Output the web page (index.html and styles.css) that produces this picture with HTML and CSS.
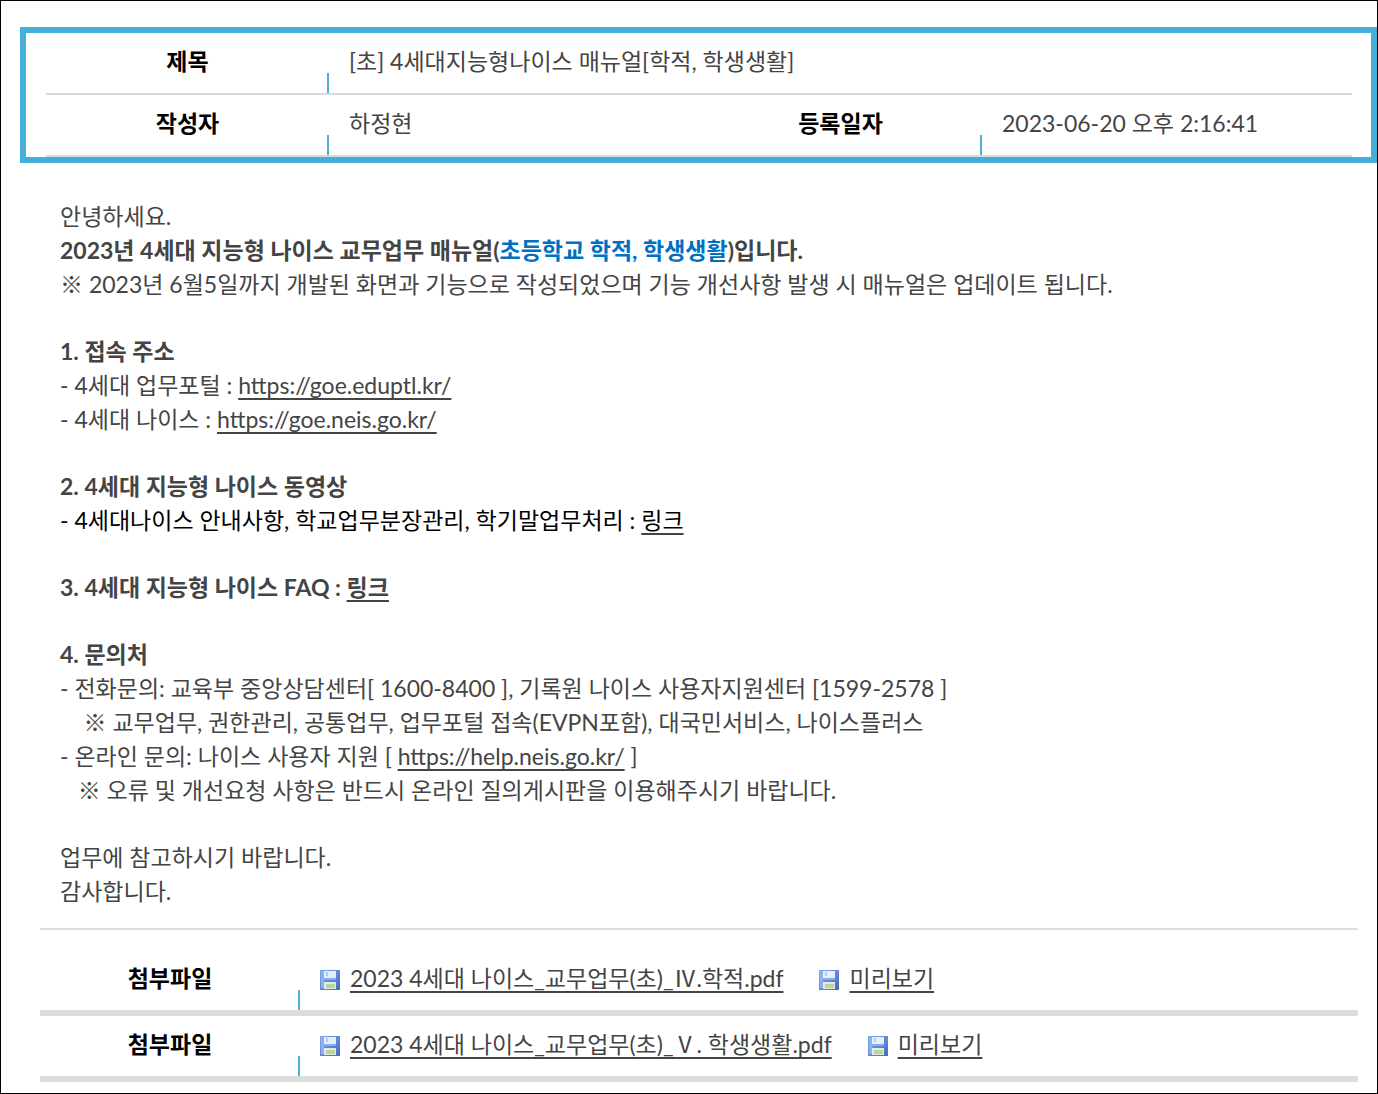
FILE: index.html
```html
<!DOCTYPE html>
<html lang="ko">
<head>
    <meta charset="UTF-8">
    <meta name="viewport" content="width=device-width, initial-scale=1.0">
    <title>[초] 4세대지능형나이스 매뉴얼[학적, 학생생활]</title>
    <link rel="stylesheet" href="styles.css">
</head>
<body>

    <!-- 디스켓 아이콘 -->
    <svg class="icon-defs" width="0" height="0" aria-hidden="true">
        <defs>
            <linearGradient id="disk-body" x1="0" y1="0" x2="1" y2="1">
                <stop offset="0" stop-color="#7fa9ea" />
                <stop offset="1" stop-color="#4a68bc" />
            </linearGradient>
        </defs>
        <symbol id="disk" viewBox="0 0 20 20">
            <rect width="20" height="20" fill="url(#disk-body)" />
            <rect x="1" y="1" width="3" height="17" fill="#8fb0ee" />
            <rect x="4" y="1" width="12" height="8" fill="#e3effc" />
            <rect x="6" y="2" width="2" height="4" fill="#b4c9ea" />
            <rect x="4" y="8" width="12" height="2" fill="#83b0ec" />
            <rect x="4" y="12" width="12" height="7" fill="#dfeaf0" />
            <rect x="6" y="14" width="9" height="4" fill="#b9d992" />
        </symbol>
    </svg>

    <div class="post-head">
        <table class="info">
            <colgroup>
                <col class="col-label">
                <col>
                <col class="col-label">
                <col>
            </colgroup>
            <tr>
                <th scope="row">제목</th>
                <td colspan="3">[초] 4세대지능형나이스 매뉴얼[학적, 학생생활]</td>
            </tr>
            <tr>
                <th scope="row">작성자</th>
                <td>하정현</td>
                <th scope="row">등록일자</th>
                <td>2023-06-20 오후 2:16:41</td>
            </tr>
        </table>
    </div>

    <div class="post-body">
        <p>
            안녕하세요.<br>
            <b>2023년 4세대 지능형 나이스 교무업무 매뉴얼(<span class="point">초등학교 학적, 학생생활</span>)입니다.</b><br>
            ※ 2023년 6월5일까지 개발된 화면과 기능으로 작성되었으며 기능 개선사항 발생 시 매뉴얼은 업데이트 됩니다.
        </p>
        <p>
            <b>1. 접속 주소</b><br>
            - 4세대 업무포털 : <a href="https://goe.eduptl.kr/">https://goe.eduptl.kr/</a><br>
            - 4세대 나이스 : <a href="https://goe.neis.go.kr/">https://goe.neis.go.kr/</a>
        </p>
        <p>
            <b>2. 4세대 지능형 나이스 동영상</b><br>
            <span class="dark">- 4세대나이스 안내사항, 학교업무분장관리, 학기말업무처리 : <a href="#">링크</a></span>
        </p>
        <p>
            <b>3. 4세대 지능형 나이스 FAQ : <a href="#">링크</a></b>
        </p>
        <p>
            <b>4. 문의처</b><br>
            - 전화문의: 교육부 중앙상담센터[ 1600-8400 ], 기록원 나이스 사용자지원센터 [1599-2578 ]<br>
            &nbsp;&nbsp;&nbsp;&nbsp;※ 교무업무, 권한관리, 공통업무, 업무포털 접속(EVPN포함), 대국민서비스, 나이스플러스<br>
            - 온라인 문의: 나이스 사용자 지원 [ <a href="https://help.neis.go.kr/">https://help.neis.go.kr/</a> ]<br>
            &nbsp;&nbsp;&nbsp;※ 오류 및 개선요청 사항은 반드시 온라인 질의게시판을 이용해주시기 바랍니다.
        </p>
        <p>
            업무에 참고하시기 바랍니다.<br>
            감사합니다.
        </p>
    </div>

    <div class="post-files">
        <table class="files">
            <colgroup>
                <col class="col-file">
                <col>
            </colgroup>
            <tr>
                <th scope="row">첨부파일</th>
                <td>
                    <div class="file">
                        <svg class="disk"><use href="#disk" /></svg>
                        <a class="name" href="#">2023 4세대 나이스_교무업무(초)_Ⅳ.학적.pdf</a>
                        <svg class="disk"><use href="#disk" /></svg>
                        <a href="#">미리보기</a>
                    </div>
                </td>
            </tr>
            <tr>
                <th scope="row">첨부파일</th>
                <td>
                    <div class="file">
                        <svg class="disk"><use href="#disk" /></svg>
                        <a class="name" href="#">2023 4세대 나이스_교무업무(초)_Ⅴ. 학생생활.pdf</a>
                        <svg class="disk"><use href="#disk" /></svg>
                        <a href="#">미리보기</a>
                    </div>
                </td>
            </tr>
        </table>
    </div>

</body>
</html>
```

FILE: styles.css
```css
* {
    box-sizing: border-box;
}
body {
    margin: 0;
    min-height: 100vh;
    padding: 26px 0 10px;
    border: 1px solid #000;
    background-color: #fff;
    color: #444;
    font-family: Lato, "Noto Sans CJK KR", sans-serif;
    font-size: 23px;
    line-height: 34px;
}
.icon-defs {
    position: absolute;
}
a {
    color: inherit;
    text-decoration: underline;
    text-decoration-color: #444;
    text-decoration-thickness: 2px;
    text-underline-offset: 4px;
}
table {
    width: 100%;
    table-layout: fixed;
    border-collapse: separate;
    border-spacing: 0;
}
th, td {
    padding: 0 0 4px 20px;
    text-align: left;
    vertical-align: middle;
}
/* 제목 칸 오른쪽 아래의 짧은 파란 선 */
th {
    padding-left: 0;
    color: #000;
    text-align: center;
    background: linear-gradient(#4bb0d2, #4bb0d2) no-repeat right bottom / 2px 20px;
    background-clip: padding-box;
}

/* 글 정보 */
.post-head {
    margin-left: 19px;
    padding: 0 19px 0 20px;
    border: 6px solid #43b0da;
}
.col-label {
    width: 283px;
}
.info th, .info td {
    height: 62px;
    border-bottom: 2px solid #d9d9d9;
}

/* 본문 */
.post-body {
    padding: 36px 20px 20px 59px;
}
.post-body p {
    margin: 0 0 33px;
}
.post-body p:last-child {
    margin-bottom: 0;
}
.point {
    color: #0070c0;
}
.dark {
    color: #000;
}

/* 첨부파일 */
.post-files {
    margin: 0 19px 0 39px;
    padding-top: 20px;
    border-top: 2px solid #dcdcdc;
}
.col-file {
    width: 260px;
}
.files th, .files td {
    height: 66px;
    border-bottom: 6px solid #dcdcdc;
}
.file {
    display: flex;
    align-items: center;
    gap: 10px;
}
.file .name {
    margin-right: 26px;
}
.disk {
    width: 20px;
    height: 20px;
    margin-top: 4px;
}
```
